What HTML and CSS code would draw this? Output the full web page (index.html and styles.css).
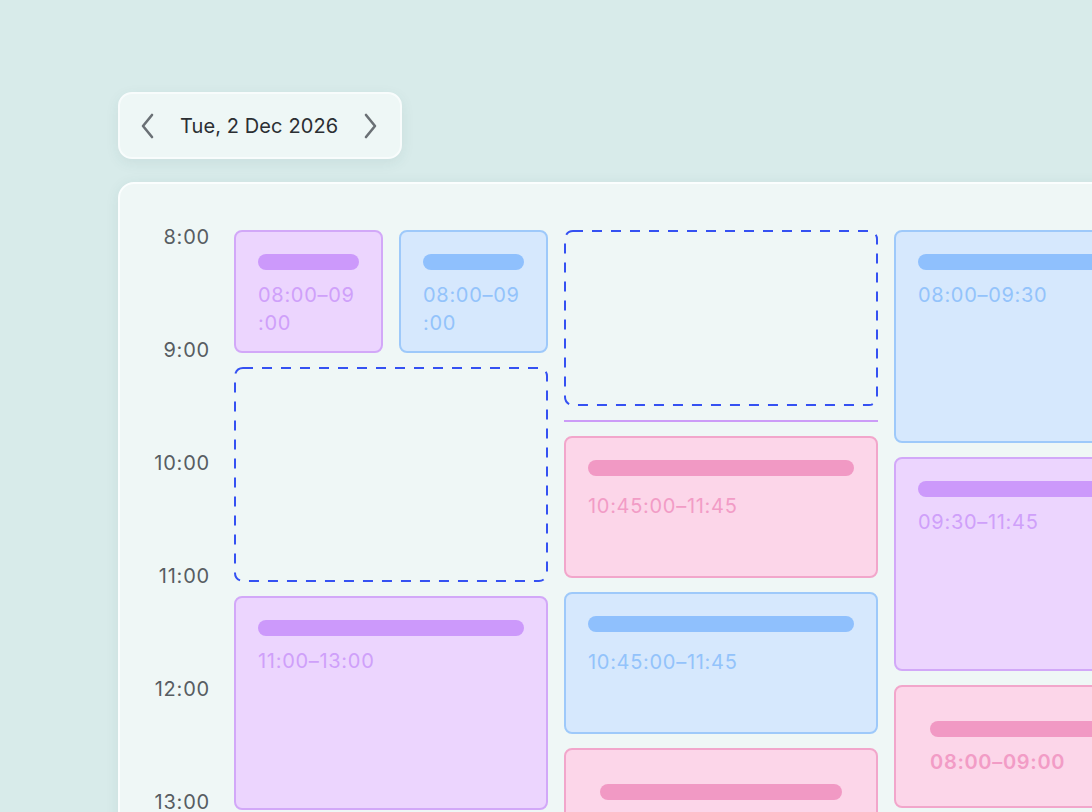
FILE: index.html
```html
<!DOCTYPE html>
<html lang="en">
<head>
    <meta charset="UTF-8">
    <title>Day schedule</title>
    <link rel="stylesheet" href="styles.css">
</head>
<body>

<div class="page">
    <div class="date-pill">
        <button class="nav-btn" aria-label="Previous day">
            <svg width="20" height="28" viewBox="0 0 20 28"><path d="M14 3 L5 14 L14 25"/></svg>
        </button>
        <span class="date-label">Tue, 2 Dec 2026</span>
        <button class="nav-btn" aria-label="Next day">
            <svg width="20" height="28" viewBox="0 0 20 28"><path d="M6 3 L15 14 L6 25"/></svg>
        </button>
    </div>

    <div class="calendar">
        <div class="hours">
            <div class="hour">8:00</div>
            <div class="hour">9:00</div>
            <div class="hour">10:00</div>
            <div class="hour">11:00</div>
            <div class="hour">12:00</div>
            <div class="hour">13:00</div>
        </div>

        <div class="columns">
            <div class="column">
                <div class="pair">
                    <div class="event purple h-123">
                        <div class="bar"></div>
                        <div class="time wrap">08:00–09:00</div>
                    </div>
                    <div class="event blue h-123">
                        <div class="bar"></div>
                        <div class="time wrap">08:00–09:00</div>
                    </div>
                </div>
                <div class="slot h-215">
                    <svg class="dash"><rect/></svg>
                </div>
                <div class="event purple h-214">
                    <div class="bar"></div>
                    <div class="time">11:00–13:00</div>
                </div>
            </div>

            <div class="column">
                <div class="slot h-176">
                    <svg class="dash"><rect/></svg>
                </div>
                <div class="now-line"></div>
                <div class="event pink h-142 spaced">
                    <div class="bar"></div>
                    <div class="time">10:45:00–11:45</div>
                </div>
                <div class="event blue h-142 spaced">
                    <div class="bar"></div>
                    <div class="time">10:45:00–11:45</div>
                </div>
                <div class="event pink h-142 roomy spaced">
                    <div class="bar"></div>
                    <div class="time">10:45:00–11:45</div>
                </div>
            </div>

            <div class="column">
                <div class="event blue h-213">
                    <div class="bar"></div>
                    <div class="time">08:00–09:30</div>
                </div>
                <div class="event purple h-214">
                    <div class="bar"></div>
                    <div class="time">09:30–11:45</div>
                </div>
                <div class="event pink h-123 roomy">
                    <div class="bar"></div>
                    <div class="time strong">08:00–09:00</div>
                </div>
            </div>
        </div>
    </div>
</div>

</body>
</html>
```

FILE: styles.css
```css
body {
    margin: 0;
    height: 812px;
    overflow: hidden;
    background-color: #d8ebea;
    font-family: Inter, "Open Sans", sans-serif;
    color: #2b2f33;
}

.page {
    padding: 92px 0 0 118px;
}

.date-pill {
    display: inline-flex;
    align-items: center;
    gap: 10px;
    height: 63px;
    padding: 0 16px 0 14px;
    background-color: #eef7f6;
    border: 2px solid #f8fcfc;
    border-radius: 14px;
    box-shadow: 0 4px 14px rgba(40, 90, 90, 0.08);
}

.nav-btn {
    border: none;
    background: none;
    padding: 0 4px;
    display: flex;
    cursor: pointer;
}

.nav-btn path {
    fill: none;
    stroke: #6a7075;
    stroke-width: 2.6;
    stroke-linecap: round;
    stroke-linejoin: round;
}

.date-label {
    font-size: 20px;
    letter-spacing: 0.1px;
    margin: 0 8px;
}

.calendar {
    margin-top: 23px;
    width: 1200px;
    height: 700px;
    display: flex;
    gap: 24px;
    padding: 46px 0 0 0;
    background-color: #eff7f6;
    border: 2px solid #fbfefe;
    border-radius: 16px;
    box-shadow: 0 2px 14px rgba(40, 90, 90, 0.08);
}

.hours {
    width: 90px;
    margin-top: -3px;
}

.hour {
    height: 113px;
    line-height: 20px;
    font-size: 20px;
    letter-spacing: 0.8px;
    text-align: right;
    color: #575d62;
}

.columns {
    display: grid;
    grid-template-columns: repeat(3, 314px);
    gap: 16px;
    align-items: start;
}

.column {
    display: flex;
    flex-direction: column;
    gap: 14px;
}

.pair {
    display: grid;
    grid-template-columns: 1fr 1fr;
    gap: 16px;
}

.event {
    box-sizing: border-box;
    padding: 22px;
    border: 2px solid;
    border-radius: 8px;
}

.event.roomy {
    padding: 34px;
}

.bar {
    height: 16px;
    border-radius: 8px;
    margin-bottom: 11px;
}

.spaced .bar {
    margin-bottom: 16px;
}

.time {
    font-size: 20px;
    line-height: 28px;
    letter-spacing: 0.7px;
}

.time.wrap {
    line-break: anywhere;
}

.time.strong {
    font-weight: 600;
}

.purple {
    background-color: #ecd5fe;
    border-color: #d2a8f8;
}
.purple .bar { background-color: #cc99fb; }
.purple .time { color: #cfa0fa; }

.blue {
    background-color: #d6e8fd;
    border-color: #9ec9fa;
}
.blue .bar { background-color: #8fc0fd; }
.blue .time { color: #93c3fb; }

.pink {
    background-color: #fcd6e9;
    border-color: #f2a6cb;
}
.pink .bar { background-color: #f199c4; }
.pink .time { color: #f29cc6; }

.slot {
    box-sizing: border-box;
}

.dash {
    display: block;
    width: 100%;
    height: 100%;
}

.dash rect {
    x: 1px;
    y: 1px;
    width: calc(100% - 2px);
    height: calc(100% - 2px);
    rx: 8px;
    fill: none;
    stroke: #3551f2;
    stroke-width: 2;
    stroke-dasharray: 10 9;
}

.now-line {
    height: 2px;
    background-color: #cc9cf7;
}

.h-123 { height: 123px; }
.h-142 { height: 142px; }
.h-176 { height: 176px; }
.h-213 { height: 213px; }
.h-214 { height: 214px; }
.h-215 { height: 215px; }
```
